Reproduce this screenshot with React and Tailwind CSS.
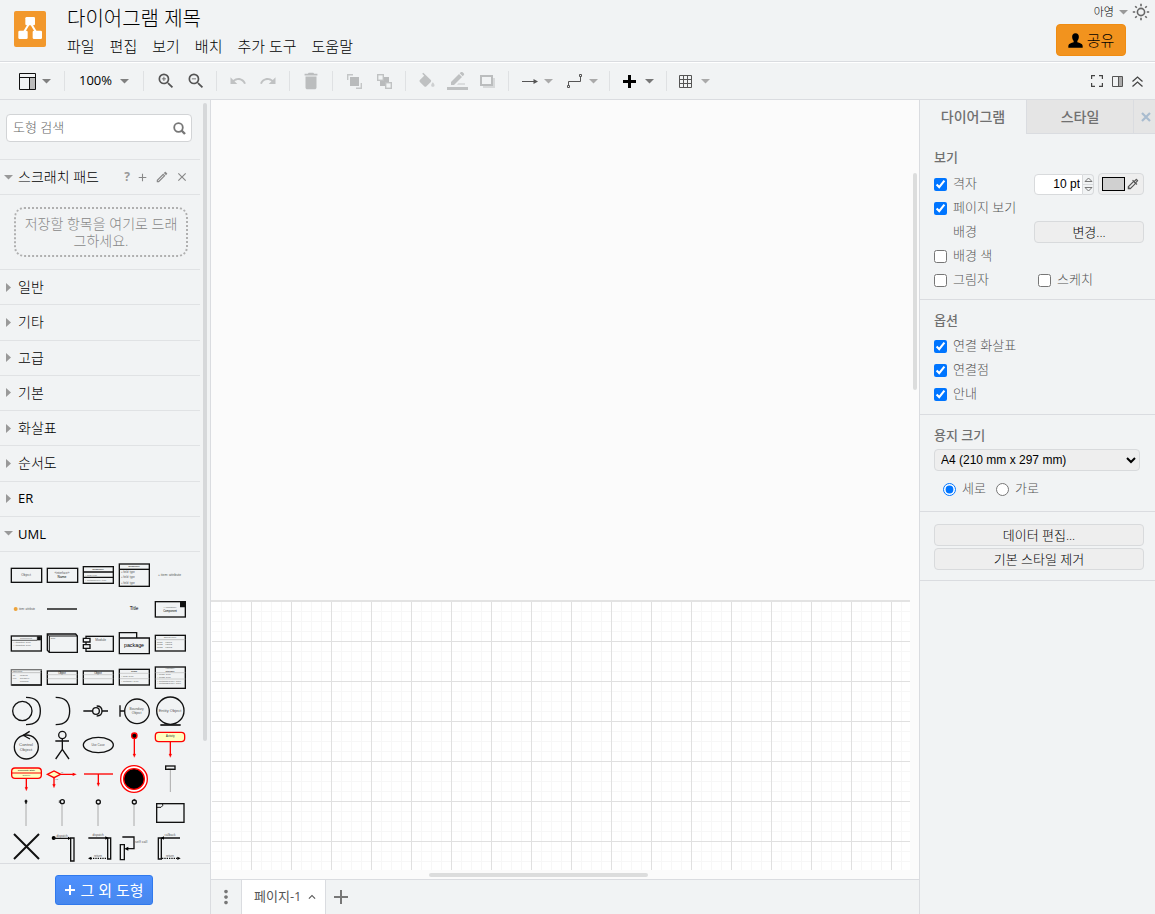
import { useState } from 'react'
import {
  MdZoomIn,
  MdZoomOut,
  MdUndo,
  MdRedo,
  MdDelete,
  MdAdd,
  MdOutlineEdit,
  MdClose,
  MdMoreVert,
  MdOutlineColorize,
  MdKeyboardArrowUp,
} from 'react-icons/md'

const menus = ['파일', '편집', '보기', '배치', '추가 도구', '도움말']
const categories = ['일반', '기타', '고급', '기본', '화살표', '순서도', 'ER', 'UML']

const Caret = ({ className = 'text-[#808080]' }) => (
  <svg width="9" height="5" viewBox="0 0 9 5" className={`shrink-0 ${className}`} aria-hidden="true">
    <path d="M0 0h9L4.5 4.5z" fill="currentColor" />
  </svg>
)

const Logo = () => (
  <svg width="32" height="36" viewBox="0 0 96 108" className="shrink-0" aria-hidden="true">
    <rect width="96" height="108" rx="6" fill="#f2982c" />
    <path d="M45 38L26 70M51 38L70 70" stroke="#fff" strokeWidth="6" />
    <rect x="34" y="18" width="29" height="25" rx="4" fill="#fff" />
    <rect x="13" y="59" width="28" height="25" rx="4" fill="#fff" />
    <rect x="56" y="59" width="28" height="25" rx="4" fill="#fff" />
  </svg>
)

const SunIcon = () => (
  <svg width="18" height="18" viewBox="0 0 18 18" fill="none" stroke="#666" strokeWidth="1.6" aria-hidden="true">
    <circle cx="9" cy="9" r="3.6" />
    <path d="M9 .8v2.4M9 14.8v2.4M.8 9h2.4M14.8 9h2.4M3.2 3.2l1.6 1.6M13.2 13.2l1.6 1.6M3.2 14.8l1.6-1.6M13.2 4.8l1.6-1.6" />
  </svg>
)

const PersonIcon = () => (
  <svg width="15" height="15" viewBox="0 0 45 45" aria-hidden="true">
    <path d="M22.500 1c7 0 11 5 10 12-.6 5-2.500 9-4.500 11v4c7 2 15 4 16 10v6H1v-6c1-6 9-8 16-10v-4c-2-2-4-6-4.500-11-1-7 3-12 10-12z" />
  </svg>
)

const SearchIcon = () => (
  <svg width="13" height="13" viewBox="0 0 13 13" fill="none" stroke="#777" className="shrink-0" aria-hidden="true">
    <circle cx="5.500" cy="5.500" r="4.300" strokeWidth="1.800" />
    <path d="M8.500 8.500l3.500 3.500" strokeWidth="2.400" />
  </svg>
)

const LayoutIcon = () => (
  <svg width="17" height="17" viewBox="0 0 17 17" aria-hidden="true">
    <rect x="10" y="5" width="6" height="11" fill="#bbb" />
    <path d="M.5.5h16v16H.5zM.5 4.5h16M10.5 4.5v12" fill="none" stroke="#111" />
  </svg>
)

const ToFrontIcon = () => (
  <svg width="15" height="15" viewBox="0 0 15 15" aria-hidden="true">
    <rect x="3" y="3" width="9" height="9" fill="#b9bbbc" />
    <path d="M.7 6V.7H6M9 14.300h5.300V9" fill="none" stroke="#c4c6c7" strokeWidth="1.400" />
  </svg>
)

const ToBackIcon = () => (
  <svg width="15" height="15" viewBox="0 0 15 15" aria-hidden="true">
    <rect x="3" y="3" width="9" height="9" fill="#b9bbbc" />
    <rect x=".7" y=".7" width="5.600" height="5.600" fill="#f1f3f4" stroke="#c0c2c3" strokeWidth="1.400" />
    <rect x="8.700" y="8.700" width="5.600" height="5.600" fill="#f1f3f4" stroke="#c0c2c3" strokeWidth="1.400" />
  </svg>
)

const FillIcon = () => (
  <svg width="20" height="20" viewBox="0 -2 24 24" fill="#bfc1c2" aria-hidden="true">
    <path d="M16.560 8.940L7.620 0 6.210 1.410l2.380 2.380-5.150 5.150c-.59.59-.59 1.540 0 2.120l5.500 5.500c.29.290.68.440 1.060.44s.77-.15 1.060-.44l5.500-5.500c.59-.58.59-1.530 0-2.120z" />
    <path d="M19 11.500s-2 2.170-2 3.500c0 1.100.9 2 2 2s2-.9 2-2c0-1.330-2-3.500-2-3.500z" opacity=".7" />
  </svg>
)

const StrokeIcon = () => (
  <svg width="21" height="18" viewBox="0 0 63 54" fill="#bfc1c2" aria-hidden="true">
    <path d="M12 39v-9L36 6l9 9-24 24zM38 4l3-3c2-2 4-2 6 0l3 3c2 2 2 4 0 6l-3 3z" />
    <path d="M30 38l4-4h20v4z" opacity=".6" />
    <rect y="45" width="63" height="9" />
  </svg>
)

const ShadowIcon = () => (
  <svg width="15" height="13" viewBox="0 0 15 13" aria-hidden="true">
    <rect x="3" y="3" width="12" height="10" fill="#d7d9da" />
    <rect x="1" y="1" width="11" height="9" fill="#f1f3f4" stroke="#bbbdbe" strokeWidth="2" />
  </svg>
)

const ArrowIcon = () => (
  <svg width="16" height="5" viewBox="0 0 16 5" aria-hidden="true">
    <path d="M0 2.500h13" stroke="#555" />
    <path d="M11.500 0L16 2.500 11.500 5z" fill="#555" />
  </svg>
)

const ConnectorIcon = () => (
  <svg width="16" height="16" viewBox="0 0 16 16" fill="none" stroke="#555" aria-hidden="true">
    <path d="M1.500 12.500v-4h12v-5" />
    <path d="M.5 12.500h2v2h-2zM12.500 1.500h2v2h-2z" />
  </svg>
)

const PlusIcon = () => (
  <svg width="13" height="13" viewBox="0 0 13 13" aria-hidden="true">
    <path d="M6.500 0v13M0 6.500h13" stroke="#000" strokeWidth="3" />
  </svg>
)

const TableIcon = () => (
  <svg width="13" height="13" viewBox="0 0 13 13" fill="none" stroke="#555" aria-hidden="true">
    <path d="M.5.5h12v12H.5zM.5 4.500h12M.5 8.500h12M4.500.5v12M8.500.5v12" />
  </svg>
)

const PanelIcon = () => (
  <svg width="11" height="11" viewBox="0 0 11 11" aria-hidden="true">
    <rect x="6" y="1" width="4" height="9" fill="#aaa" />
    <path d="M.5.5h10v10H.5zM6.500.5v10" fill="none" stroke="#555" />
  </svg>
)

const DoubleUpIcon = () => (
  <svg width="11" height="11" viewBox="0 0 11 11" fill="none" stroke="#444" strokeWidth="1.300" aria-hidden="true">
    <path d="M.5 5.500l5-4.500 5 4.500M.5 10.500l5-4.500 5 4.500" />
  </svg>
)

const ToolButton = ({ label, children }) => (
  <button aria-label={label} className="flex h-8 w-[30px] items-center justify-center hover:bg-black/5">
    {children}
  </button>
)

const MenuToolButton = ({ label, caret = 'text-[#aaa]', children }) => (
  <button aria-label={label} className="flex h-8 w-[45px] items-center justify-between px-[7px] hover:bg-black/5">
    {children}
    <Caret className={caret} />
  </button>
)

const ToolGroup = ({ className, children }) => (
  <div className={`flex h-5 shrink-0 items-center justify-center border-r border-[#dfe1e3] ${className}`}>{children}</div>
)

const Label = ({ x = 54, y, size = 8, anchor = 'middle', fill = '#555', children }) => (
  <text x={x} y={y} fontSize={size} textAnchor={anchor} fill={fill} stroke="none" fontWeight="400" fontFamily="Liberation Sans, sans-serif">
    {children}
  </text>
)

// every drawing sits in a 108 x 102 box
const DownArrow = ({ from, to, x = 54 }) => (
  <g stroke="red" fill="red">
    <path d={`M${x} ${from}V${to - 6}`} strokeWidth="4" />
    <path d={`M${x - 4} ${to - 10}h8l-4 10z`} strokeWidth="1" />
  </g>
)

const Lifeline = () => <path d="M54 24V90" stroke="#aaa" strokeWidth="3" />

const umlShapes = [
  ['Object', <><rect x="10" y="31" width="91" height="42" /><Label y="55" size="10">Object</Label></>],
  ['Interface', <><rect x="10" y="31" width="91" height="42" /><Label y="48" size="9">«interface»</Label><Label y="60" size="10" fill="#000">Name</Label></>],
  ['Class', <><rect x="10" y="26" width="90" height="50" /><path d="M10 42h90M10 58h90" /><Label y="37" size="7" fill="#000">Classname</Label><Label x="15" y="53" size="7" anchor="start">+ field: type</Label><Label x="15" y="70" size="7" anchor="start">+ method(type): type</Label></>],
  ['Class 2', <><rect x="10" y="18" width="90" height="67" /><path d="M10 34h90" /><Label y="28" size="7" fill="#000">Classname</Label><Label x="15" y="45" anchor="start">+ field: type</Label><Label x="15" y="60" anchor="start">+ field: type</Label><Label x="15" y="77" anchor="start">+ field: type</Label></>],
  ['Item', <Label x="18" y="54" size="10" anchor="start">+ item: attribute</Label>],

  ['Item 2', <><circle cx="23" cy="51" r="6" fill="#eda33b" stroke="none" /><Label x="33" y="54" anchor="start">item: attribute</Label></>],
  ['Divider', <path d="M9 51h90" strokeWidth="5" stroke="#333" />],
  ['Spacer', null],
  ['Title', <Label y="54" size="14" fill="#000">Title</Label>],
  ['Component', <><rect x="10" y="29" width="90" height="46" /><path d="M86 32h12v12H86z" fill="#111" /><Label y="48" size="7">«Annotation»</Label><Label y="59" fill="#000">Component</Label></>],

  ['Component with attributes', <><rect x="10" y="30" width="90" height="45" /><path d="M88 32h10v10H88zM10 43h78" fill="#111" strokeWidth="2" /><Label y="40" size="7">Component</Label><Label x="14" y="52" size="7" anchor="start">+ Attribute1: Type</Label><Label x="14" y="60" size="7" anchor="start">+ Attribute2: Type</Label></>],
  ['Block', <><path d="M10 24h85l5 6v49H16l-6-6z" /><path d="M10 24l6 6h84M16 30v49" strokeWidth="3" /><Label x="20" y="39" size="6" anchor="start">block</Label></>],
  ['Module', <><rect x="18" y="31" width="82" height="45" /><path d="M10 37h20v11H10zM10 56h20v11H10z" fill="#f1f3f4" /><Label x="62" y="46" size="10">Module</Label></>],
  ['Package', <><path d="M10 36V20h52v16M10 36h90v47H10z" /><Label y="62" size="16" fill="#000">package</Label></>],
  ['Object 2', <><rect x="10" y="28" width="90" height="47" /><path d="M10 41h90" stroke="#aaa" strokeWidth="2" /><Label y="37" size="7">Object:Type</Label><Label x="15" y="50" size="7" anchor="start">field1 = value1</Label><Label x="15" y="58" size="7" anchor="start">field2 = value2</Label><Label x="15" y="66" size="7" anchor="start">field3 = value3</Label></>],

  ['Table', <><rect x="10" y="29" width="90" height="46" stroke="#777" /><path d="M10 75h90V32" /><path d="M10 38h90" stroke="#aaa" strokeWidth="2" /><Label x="14" y="36" size="6" anchor="start">Tablename</Label><Label x="14" y="47" size="6" anchor="start">PK</Label><Label x="36" y="47" size="6" anchor="start">uniqueId</Label><Label x="14" y="56" size="6" anchor="start">FK1</Label><Label x="36" y="56" size="6" anchor="start">foreignKey</Label><Label x="36" y="65" size="6" anchor="start">fieldname</Label></>],
  ['Object 3', <><rect x="10" y="33" width="90" height="40" /><path d="M10 44h90M10 56h90" stroke="#bbb" strokeWidth="2" /><Label y="42" fill="#000">Object</Label></>],
  ['Object 4', <><rect x="10" y="33" width="90" height="40" /><path d="M10 44h90M10 56h90" stroke="#bbb" strokeWidth="2" /><Label y="42" fill="#000">Object</Label></>],
  ['Class 3', <><rect x="10" y="28" width="90" height="47" /><path d="M10 40h90M10 56h90" stroke="#bbb" strokeWidth="2" /><Label y="37" size="7" fill="#000">Class</Label><Label x="15" y="50" size="7" anchor="start">+ field: Type</Label><Label x="15" y="65" size="7" anchor="start">+ method(): Type</Label></>],
  ['Interface 2', <><rect x="10" y="21" width="90" height="64" /><path d="M10 38h90M10 57h90" stroke="#bbb" strokeWidth="2" /><Label y="28" size="6">«Interface»</Label><Label y="35" size="7" fill="#000">Interface</Label><Label x="15" y="46" size="7" anchor="start">+ field1: Type</Label><Label x="15" y="54" size="7" anchor="start">+ field2: Type</Label><Label x="15" y="65" size="7" anchor="start">+ method1(Type): Type</Label><Label x="15" y="73" size="7" anchor="start">+ method2(Type): Type</Label></>],

  ['Provided/Required Interface', <><circle cx="43" cy="51" r="29" /><path d="M54 10C84 10 97 26 97 51S84 92 54 92" /></>],
  ['Required Interface', <path d="M35 10C65 10 77 26 77 51S65 92 35 92" />],
  ['Lollipop', <><path d="M10 51h28M66 51h18" /><circle cx="48" cy="51" r="10" /><path d="M50 36c12 0 16 6 16 15s-4 15-16 15" /></>],
  ['Boundary Object', <><path d="M12 34v34M12 51h14" /><circle cx="63" cy="52" r="37" /><Label x="62" y="48" size="10">Boundary</Label><Label x="62" y="59" size="10">Object</Label></>],
  ['Entity Object', <><circle cx="55" cy="50" r="41" /><path d="M25 93h61" strokeWidth="5" /><Label y="54" size="12">Entity Object</Label></>],

  ['Control Object', <><circle cx="55" cy="57" r="36" /><path d="M65 10L46 22l20 11" /><Label y="54" size="13">Control</Label><Label y="69" size="13">Object</Label></>],
  ['Actor', <><circle cx="55" cy="21" r="11" /><path d="M55 32v32M34 39h41M55 64L35 93M55 64l20 29" /></>],
  ['Use Case', <><ellipse cx="55" cy="51" rx="45" ry="23" /><Label y="54" size="9">Use Case</Label></>],
  ['Start', <><circle cx="55" cy="23" r="8" fill="#000" stroke="red" /><DownArrow x={55} from={32} to={88} /></>],
  ['Activity', <><rect x="10" y="13" width="88" height="28" rx="10" fill="#ffffc0" stroke="red" /><DownArrow x={55} from={42} to={88} /><Label x="55" y="27" size="8" fill="#222">Activity</Label></>],

  ['Composite State', <><rect x="11" y="18" width="89" height="31" rx="10" fill="#ffffc0" stroke="red" /><path d="M11 33h89" stroke="red" strokeWidth="3" /><DownArrow x={55} from={50} to={86} /><Label x="55" y="28" size="7" fill="#000">Composite State</Label><Label x="55" y="43" size="7">Subtitle</Label></>],
  ['Condition', <><path d="M10 37l20-10 20 10-20 10zM50 37h40" fill="#ffffc0" stroke="red" /><path d="M86 32l12 5-12 5z" fill="red" stroke="none" /><DownArrow x={30} from={48} to={77} /><Label x="51" y="34" size="6" anchor="start">no</Label><Label x="33" y="54" size="6" anchor="start">yes</Label></>],
  ['Fork/Join', <><path d="M12 36h87" stroke="red" strokeWidth="4" /><DownArrow x={55} from={36} to={73} /></>],
  ['End', <><circle cx="54" cy="51" r="40" stroke="red" fill="#fff" /><circle cx="54" cy="51" r="31" stroke="red" fill="#000" /></>],
  ['Lifeline', <><path d="M55 23v67" stroke="#aaa" strokeWidth="3" /><rect x="41" y="12" width="28" height="10" /><Label x="55" y="20" size="6">:Object</Label></>],

  ['Actor Lifeline', <><Lifeline /><path d="M54 11v12M50 16h8" strokeWidth="5" /></>],
  ['Boundary Lifeline', <><Lifeline /><circle cx="55" cy="17" r="6" /><path d="M46 13v8" strokeWidth="2" /></>],
  ['Entity Lifeline', <><Lifeline /><circle cx="55" cy="18" r="6" /></>],
  ['Control Lifeline', <><Lifeline /><circle cx="55" cy="18" r="6" /><path d="M57 9l-4 3 4 3" strokeWidth="2" /></>],
  ['Frame', <><rect x="14" y="23" width="82" height="56" /><path d="M14 34h13l5-5v-6" strokeWidth="3" /></>],

  ['Destruction', <path d="M18 12l75 75M93 12L18 87" strokeWidth="6" />],
  ['Invocation 1', <><circle cx="29" cy="24" r="6" fill="#000" stroke="none" /><path d="M29 25h46M80 24h10v69H80z" /><path d="M72 20l9 5-9 5z" fill="#000" stroke="none" /><Label y="20" size="9">dispatch</Label></>],
  ['Invocation 2', <><path d="M25 24h56M83 24h9v63h-9z" /><path d="M76 19l10 5-10 5z" fill="#000" stroke="none" /><path d="M32 85h50" strokeDasharray="4 3" /><path d="M34 80l-10 5 10 5z" fill="#000" stroke="none" /><Label y="18" size="9">dispatch</Label><Label y="81" size="9">return</Label></>],
  ['Self Call', <><path d="M13 44h12v45H13zM19 21h35v35H34" /><path d="M37 50l-12 6 12 6z" fill="#000" stroke="none" /><Label x="57" y="39" size="11" anchor="start">self call</Label></>],
  ['Callback', <><path d="M19 24h9v63h-9zM30 24h54" /><path d="M30 85h48" strokeDasharray="4 3" /><path d="M36 19l-10 5 10 5zM76 80l10 5-10 5z" fill="#000" stroke="none" /><Label y="18" size="9">callback</Label><Label y="81" size="9">return</Label></>],
]

const SideRow = ({ title, open }) => (
  <button className="flex items-center border-b border-[#e0e2e4] pl-1 text-left text-sm text-black">
    <span className="flex w-[14px] items-center text-[#999]">
      {open ? (
        <Caret className="text-[#999]" />
      ) : (
        <svg width="5" height="9" viewBox="0 0 5 9" className="ml-0.5" aria-hidden="true">
          <path d="M0 0v9l5-4.500z" fill="currentColor" />
        </svg>
      )}
    </span>
    {/^[A-Z]+$/.test(title) ? <span className="text-[13px] font-medium">{title}</span> : title}
  </button>
)

const Sidebar = () => (
  <aside className="flex w-[211px] shrink-0 flex-col border-r border-[#dadce0]">
    <div className="relative min-h-0 flex-1 overflow-hidden pr-[10px]">
      <div className="border-b border-[#e0e2e4] px-1.5 pt-3.5 pb-[17px]">
        <div className="mr-0.5 flex h-7 items-center rounded border border-[#d2d4d6] bg-white pr-[5px] pl-1.5">
          <input aria-label="도형 검색" placeholder="도형 검색" className="min-w-0 flex-1 text-[13px] outline-none placeholder:text-[#666]" />
          <SearchIcon />
        </div>
      </div>

      <div className="flex h-[35px] items-center border-b border-[#e0e2e4] pr-[11px] pl-1 text-sm">
        <Caret className="text-[#999]" />
        <span className="ml-[5px] flex-1">스크래치 패드</span>
        <div className="flex items-center gap-1.5 text-[#888]">
          <button aria-label="도움말" className="text-xs font-bold text-[#999]">?</button>
          <button aria-label="추가"><MdAdd size={13} /></button>
          <button aria-label="편집"><MdOutlineEdit size={14} /></button>
          <button aria-label="닫기"><MdClose size={14} /></button>
        </div>
      </div>
      <div className="border-b border-[#e0e2e4] px-3 py-3 pl-3.5">
        <div className="flex h-[50px] items-center justify-center rounded-[10px] border-2 border-dotted border-[#b0b0b0] px-1 text-center text-sm leading-[17px] break-all text-[#888]">
          저장할 항목을 여기로 드래그하세요.
        </div>
      </div>

      <div className="grid h-[282px] grid-rows-8">
        {categories.map((name) => (
          <SideRow key={name} title={name} open={name === 'UML'} />
        ))}
      </div>

      <div className="flex flex-wrap pt-1.5 pl-2">
        {umlShapes.map(([name, shape]) => (
          <button key={name} aria-label={name} className="h-[34px] w-9">
            <svg width="36" height="34" viewBox="0 0 108 102" fill="none" stroke="#111" strokeWidth="4">
              {shape}
            </svg>
          </button>
        ))}
      </div>
      <div className="absolute top-[3px] right-[3px] h-[638px] w-1 rounded bg-[#d6d8da]" />
    </div>
    <div className="flex h-[51px] items-center justify-center border-t border-[#dadce0] pt-0.5 pr-0.5">
      <button className="flex h-[30px] w-[98px] items-center justify-center gap-1.5 rounded-[3px] border border-[#3079ed] bg-linear-to-b from-[#4d90fe] to-[#4787ed] text-[15px] font-normal text-white">
        <svg width="10" height="10" viewBox="0 0 10 10" aria-hidden="true">
          <path d="M5 0v10M0 5h10" stroke="#fff" strokeWidth="2" />
        </svg>
        그 외 도형
      </button>
    </div>
  </aside>
)

const Canvas = () => (
  <main className="flex min-w-0 flex-1 flex-col">
    <div className="relative flex min-h-0 flex-1 flex-col bg-[#fbfbfb] pr-[9px] pb-[9px]">
      <div className="h-[500px] shrink-0" />
      <div className="min-h-0 flex-1 border-t-2 border-[#e3e3e3] bg-white pl-px">
        <svg width="100%" height="100%" className="block" aria-hidden="true">
          <defs>
            <pattern id="grid" width="40" height="40" patternUnits="userSpaceOnUse">
              <path d="M9.500 0v40M19.500 0v40M29.500 0v40M0 9.500h40M0 19.500h40M0 29.500h40" stroke="#f7f7f7" fill="none" />
              <path d="M39.500 0v40M0 39.500h40" stroke="#e0e0e0" fill="none" />
            </pattern>
          </defs>
          <rect width="100%" height="100%" fill="url(#grid)" />
        </svg>
      </div>
      <div className="absolute top-[73px] right-[2px] h-[217px] w-1 rounded bg-[#dcdddd]" />
      <div className="absolute bottom-[2px] left-[218px] h-1 w-[219px] rounded bg-[#dcdddd]" />
    </div>
    <div className="flex h-[35px] items-stretch border-t border-[#dadce0] text-[#777]">
      <button aria-label="페이지 목록" className="flex w-[30px] items-center justify-center">
        <MdMoreVert size={22} />
      </button>
      <button className="flex items-center gap-[3px] border-x border-[#dadce0] bg-white pr-1.5 pl-3 text-[13px] font-normal text-[#555]">
        페이지-1
        <MdKeyboardArrowUp size={14} />
      </button>
      <button aria-label="페이지 추가" className="flex w-[30px] items-center justify-center">
        <MdAdd size={24} />
      </button>
    </div>
  </main>
)

const Check = ({ label, checked = false, className = '' }) => {
  const [on, setOn] = useState(checked)
  return (
    <label className={`flex h-6 items-center gap-1.5 ${className}`}>
      <input type="checkbox" checked={on} onChange={(e) => setOn(e.target.checked)} className="size-[13px]" />
      {label}
    </label>
  )
}

const PanelButton = ({ className = '', children }) => (
  <button className={`h-[22px] rounded border border-[#d8dadc] bg-[#eee] text-[13px] leading-5 text-black ${className}`}>{children}</button>
)

const FormatPanel = () => {
  const [orientation, setOrientation] = useState('세로')

  return (
    <aside className="w-[236px] shrink-0 border-l border-[#dadce0] text-[13px] text-[#555]">
      <div className="flex h-[34px] text-sm text-[#707070]">
        <button className="w-[106px] font-medium">다이어그램</button>
        <button className="flex-1 border-b border-l border-[#dadce0] bg-[#e5e5e5] font-medium">스타일</button>
        <button aria-label="닫기" className="flex w-[22px] items-center justify-end border-b border-l border-[#dadce0] bg-[#e5e5e5] pr-1">
          <svg width="10" height="10" viewBox="0 0 10 10" fill="none" stroke="#a9bccf" strokeWidth="2.200">
            <path d="M1 1l8 8M9 1L1 9" />
          </svg>
        </button>
      </div>

      <section className="border-b border-[#dadce0] pt-[11px] pr-[11px] pb-[7px] pl-3.5">
        <h2 className="mb-[3px] h-6 leading-6 font-medium text-[#707070]">보기</h2>
        <div className="flex h-6 items-center">
          <Check label="격자" checked />
          <div className="ml-auto flex items-center gap-1">
            <div className="flex items-center">
              <input
                aria-label="격자 크기"
                defaultValue="10 pt"
                className="h-[21px] w-[49px] rounded-l border border-[#d8dadc] bg-white pr-0.5 text-right font-[Liberation_Sans] text-xs font-normal text-black"
              />
              <span className="flex h-[21px] w-[11px] flex-col rounded-r border border-l-0 border-[#d8dadc] text-[#777]">
                <button aria-label="늘리기" className="flex flex-1 items-center justify-center border-b border-[#d8dadc]">
                  <svg width="9" height="5" viewBox="0 0 9 5" fill="none" stroke="currentColor"><path d="M1 4.500h7L4.500 1z" /></svg>
                </button>
                <button aria-label="줄이기" className="flex flex-1 items-center justify-center">
                  <svg width="9" height="5" viewBox="0 0 9 5" fill="none" stroke="currentColor"><path d="M1 .5h7L4.500 4z" /></svg>
                </button>
              </span>
            </div>
            <button aria-label="격자 색" className="flex h-[22px] w-[46px] items-center justify-between rounded border border-[#d8dadc] bg-[#eee] px-[3px]">
              <span className="h-3.5 w-[23px] border border-black bg-[#d0d0d0]" />
              <MdOutlineColorize size={14} className="text-[#555]" />
            </button>
          </div>
        </div>
        <Check label="페이지 보기" checked />
        <div className="flex h-6 items-center justify-between pl-[19px]">
          <span>배경</span>
          <PanelButton className="w-[110px]">변경...</PanelButton>
        </div>
        <Check label="배경 색" />
        <div className="flex">
          <Check label="그림자" className="w-[104px]" />
          <Check label="스케치" />
        </div>
      </section>

      <section className="border-b border-[#dadce0] px-3.5 py-2">
        <h2 className="mb-0.5 h-6 leading-6 font-medium text-[#707070]">옵션</h2>
        <Check label="연결 화살표" checked />
        <Check label="연결점" checked />
        <Check label="안내" checked />
      </section>

      <section className="border-b border-[#dadce0] px-3.5 pt-2 pb-2.5">
        <h2 className="mb-0.5 h-6 leading-6 font-medium text-[#707070]">용지 크기</h2>
        <select
          aria-label="용지 크기"
          className="block h-[22px] w-[206px] rounded border border-[#d8dadc] bg-[#eee] px-0.5 font-[Liberation_Sans] text-xs font-normal text-black"
        >
          <option>A4 (210 mm x 297 mm)</option>
        </select>
        <div className="mt-1.5 flex gap-2.5 pl-[9px]">
          {['세로', '가로'].map((name) => (
            <label key={name} className="flex h-6 items-center gap-1.5">
              <input
                type="radio"
                name="orientation"
                checked={orientation === name}
                onChange={() => setOrientation(name)}
                className="size-[13px]"
              />
              {name}
            </label>
          ))}
        </div>
      </section>

      <section className="flex flex-col gap-0.5 border-b border-[#dadce0] pt-3 pr-[11px] pb-2.5 pl-3.5">
        <PanelButton>데이터 편집...</PanelButton>
        <PanelButton>기본 스타일 제거</PanelButton>
      </section>
    </aside>
  )
}

const App = () => {
  return (
    <div className="flex h-screen flex-col overflow-hidden bg-[#f1f3f4] font-['Open_Sans','Noto_Sans_CJK_KR',sans-serif] font-light text-black">
      <header className="flex h-[62px] shrink-0 justify-between border-b border-[#dadce0]">
        <div className="flex pt-[11px] pl-3.5">
          <Logo />
          <div className="-mt-[5px] ml-[21px]">
            <h1 className="text-xl leading-[26px]">다이어그램 제목</h1>
            <nav className="mt-0.5 flex gap-[15px] text-[15px] leading-6">
              {menus.map((name) => (
                <button key={name}>{name}</button>
              ))}
            </nav>
          </div>
        </div>
        <div className="flex flex-col items-end">
          <div className="flex h-6 items-center gap-1 pr-[5px]">
            <button className="flex items-center gap-[5px] text-[11px]">
              아영
              <Caret className="text-[#999]" />
            </button>
            <button aria-label="모양"><SunIcon /></button>
          </div>
          <button className="mr-[29px] flex h-8 w-[70px] items-center justify-center gap-1 rounded border border-[#ef8c12] bg-[#f2931e] text-[15px]">
            <PersonIcon />
            공유
          </button>
        </div>
      </header>

      <div className="flex h-[38px] shrink-0 items-center justify-between border-t border-b border-t-white border-b-[#dadce0]">
        <div className="flex items-center">
          <ToolGroup className="w-[65px] pl-1.5">
            <button aria-label="레이아웃" className="flex items-center gap-1.5">
              <LayoutIcon />
              <Caret />
            </button>
          </ToolGroup>
          <ToolGroup className="w-[79px]">
            <button className="flex items-center gap-2 text-[13px] font-normal">
              100%
              <Caret />
            </button>
          </ToolGroup>
          <ToolGroup className="w-[73px] pl-0.5 text-[#555]">
            <ToolButton label="확대"><MdZoomIn size={20} className="stroke-current" /></ToolButton>
            <ToolButton label="축소"><MdZoomOut size={20} className="stroke-current" /></ToolButton>
          </ToolGroup>
          <ToolGroup className="w-[73px] text-[#c0c2c3]">
            <ToolButton label="실행 취소"><MdUndo size={18} /></ToolButton>
            <ToolButton label="다시 실행"><MdRedo size={18} /></ToolButton>
          </ToolGroup>
          <ToolGroup className="w-[43px] text-[#bbbdbe]">
            <ToolButton label="삭제"><MdDelete size={22} /></ToolButton>
          </ToolGroup>
          <ToolGroup className="w-[73px]">
            <ToolButton label="맨 앞으로"><ToFrontIcon /></ToolButton>
            <ToolButton label="맨 뒤로"><ToBackIcon /></ToolButton>
          </ToolGroup>
          <ToolGroup className="w-[103px]">
            <ToolButton label="채우기 색"><FillIcon /></ToolButton>
            <ToolButton label="선 색"><StrokeIcon /></ToolButton>
            <ToolButton label="그림자"><ShadowIcon /></ToolButton>
          </ToolGroup>
          <ToolGroup className="w-[101px] pl-0.5">
            <MenuToolButton label="연결"><ArrowIcon /></MenuToolButton>
            <MenuToolButton label="경유점"><ConnectorIcon /></MenuToolButton>
          </ToolGroup>
          <ToolGroup className="w-[57px]">
            <MenuToolButton label="삽입" caret="text-[#777]"><PlusIcon /></MenuToolButton>
          </ToolGroup>
          <div className="flex w-[54px] justify-center">
            <MenuToolButton label="표"><TableIcon /></MenuToolButton>
          </div>
        </div>
        <div className="flex items-center gap-[9px] pr-3">
          <button aria-label="전체 화면">
            <svg width="12" height="12" viewBox="0 0 12 12" fill="none" stroke="#444" strokeWidth="1.200">
              <path d="M.6 4V.6H4M8 .6h3.400V4M11.400 8v3.400H8M4 11.400H.6V8" />
            </svg>
          </button>
          <button aria-label="서식"><PanelIcon /></button>
          <button aria-label="접기"><DoubleUpIcon /></button>
        </div>
      </div>

      <div className="flex min-h-0 flex-1">
        <Sidebar />
        <Canvas />
        <FormatPanel />
      </div>
    </div>
  )
}

export default App
